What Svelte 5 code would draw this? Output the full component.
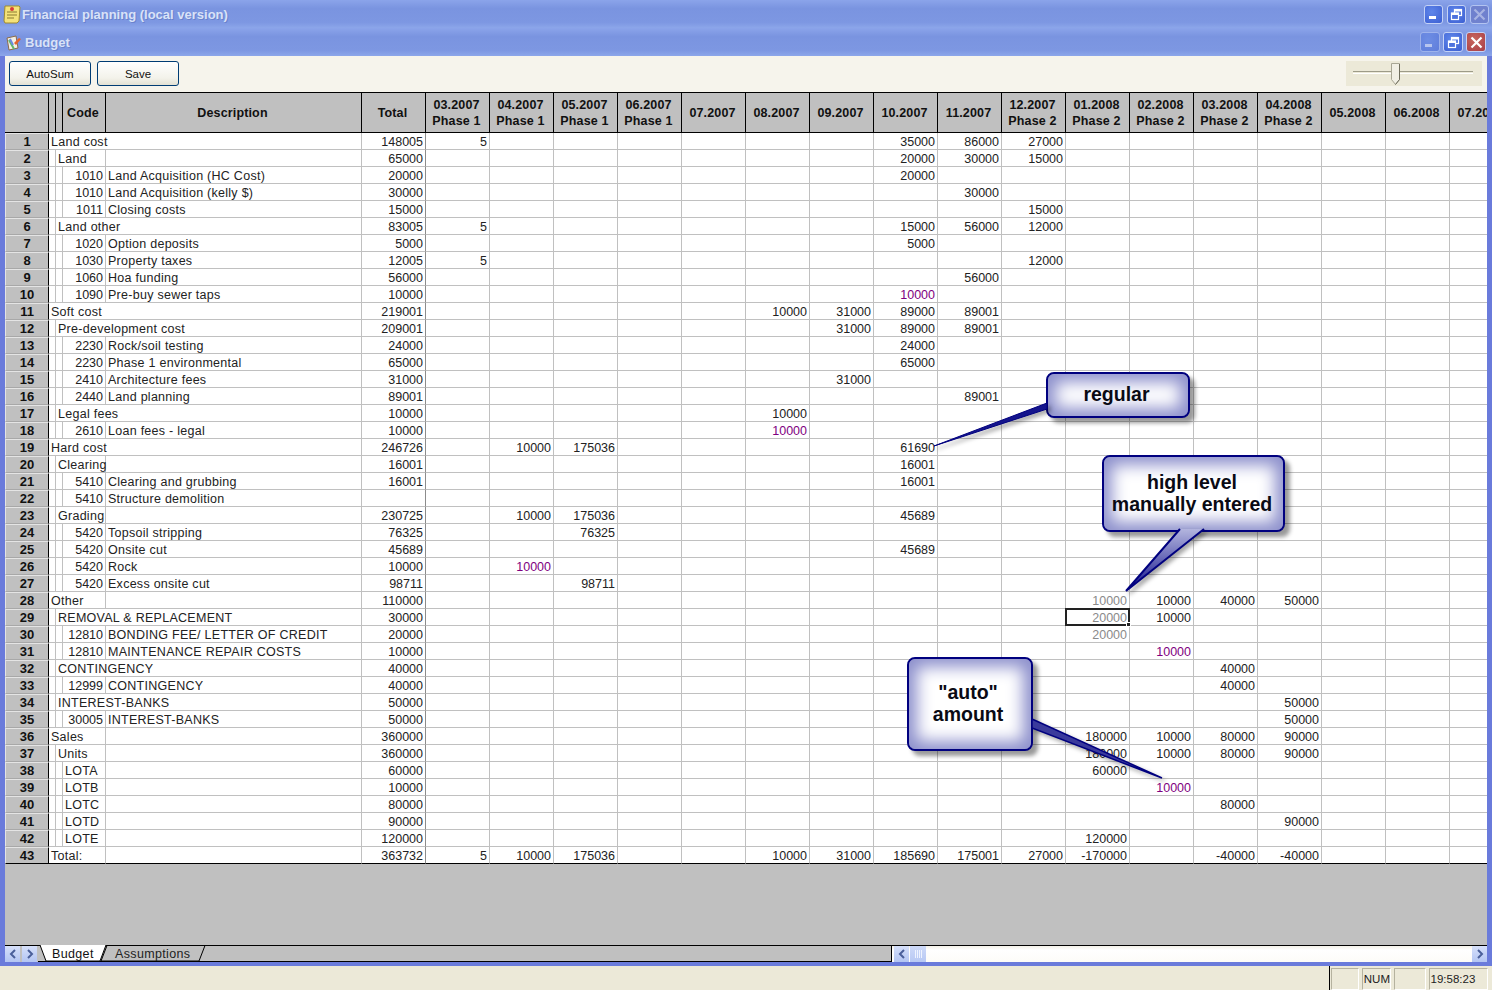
<script>
  const months = [
    ['03.2007', 'Phase 1'], ['04.2007', 'Phase 1'], ['05.2007', 'Phase 1'], ['06.2007', 'Phase 1'],
    ['07.2007'], ['08.2007'], ['09.2007'], ['10.2007'], ['11.2007'],
    ['12.2007', 'Phase 2'], ['01.2008', 'Phase 2'], ['02.2008', 'Phase 2'], ['03.2008', 'Phase 2'], ['04.2008', 'Phase 2'],
    ['05.2008'], ['06.2008'], ['07.2008']
  ];

  // lvl 0-2 = tree depth, over = text runs across the description column
  const rows = [
    { lvl: 0, text: 'Land cost', over: true, total: 148005, v: { 0: 5, 7: 35000, 8: 86000, 9: 27000 } },
    { lvl: 1, text: 'Land', total: 65000, v: { 7: 20000, 8: 30000, 9: 15000 } },
    { lvl: 2, code: 1010, text: 'Land Acquisition (HC Cost)', total: 20000, v: { 7: 20000 } },
    { lvl: 2, code: 1010, text: 'Land Acquisition (kelly $)', total: 30000, v: { 8: 30000 } },
    { lvl: 2, code: 1011, text: 'Closing costs', total: 15000, v: { 9: 15000 } },
    { lvl: 1, text: 'Land other', over: true, total: 83005, v: { 0: 5, 7: 15000, 8: 56000, 9: 12000 } },
    { lvl: 2, code: 1020, text: 'Option deposits', total: 5000, v: { 7: 5000 } },
    { lvl: 2, code: 1030, text: 'Property taxes', total: 12005, v: { 0: 5, 9: 12000 } },
    { lvl: 2, code: 1060, text: 'Hoa funding', total: 56000, v: { 8: 56000 } },
    { lvl: 2, code: 1090, text: 'Pre-buy sewer taps', total: 10000, v: { 7: 10000 }, purple: 7 },
    { lvl: 0, text: 'Soft cost', over: true, total: 219001, v: { 5: 10000, 6: 31000, 7: 89000, 8: 89001 } },
    { lvl: 1, text: 'Pre-development cost', over: true, total: 209001, v: { 6: 31000, 7: 89000, 8: 89001 } },
    { lvl: 2, code: 2230, text: 'Rock/soil testing', total: 24000, v: { 7: 24000 } },
    { lvl: 2, code: 2230, text: 'Phase 1 environmental', total: 65000, v: { 7: 65000 } },
    { lvl: 2, code: 2410, text: 'Architecture fees', total: 31000, v: { 6: 31000 } },
    { lvl: 2, code: 2440, text: 'Land planning', total: 89001, v: { 8: 89001 } },
    { lvl: 1, text: 'Legal fees', over: true, total: 10000, v: { 5: 10000 } },
    { lvl: 2, code: 2610, text: 'Loan fees - legal', total: 10000, v: { 5: 10000 }, purple: 5 },
    { lvl: 0, text: 'Hard cost', over: true, total: 246726, v: { 1: 10000, 2: 175036, 7: 61690 } },
    { lvl: 1, text: 'Clearing', total: 16001, v: { 7: 16001 } },
    { lvl: 2, code: 5410, text: 'Clearing and grubbing', total: 16001, v: { 7: 16001 } },
    { lvl: 2, code: 5410, text: 'Structure demolition', total: '', v: {} },
    { lvl: 1, text: 'Grading', total: 230725, v: { 1: 10000, 2: 175036, 7: 45689 } },
    { lvl: 2, code: 5420, text: 'Topsoil stripping', total: 76325, v: { 2: 76325 } },
    { lvl: 2, code: 5420, text: 'Onsite cut', total: 45689, v: { 7: 45689 } },
    { lvl: 2, code: 5420, text: 'Rock', total: 10000, v: { 1: 10000 }, purple: 1 },
    { lvl: 2, code: 5420, text: 'Excess onsite cut', total: 98711, v: { 2: 98711 } },
    { lvl: 0, text: 'Other', total: 110000, v: { 10: 10000, 11: 10000, 12: 40000, 13: 50000 }, gray: 10 },
    { lvl: 1, text: 'REMOVAL & REPLACEMENT', over: true, total: 30000, v: { 10: 20000, 11: 10000 }, gray: 10, sel: 10 },
    { lvl: 2, code: 12810, text: 'BONDING FEE/ LETTER OF CREDIT', total: 20000, v: { 10: 20000 }, gray: 10 },
    { lvl: 2, code: 12810, text: 'MAINTENANCE REPAIR COSTS', total: 10000, v: { 11: 10000 }, purple: 11 },
    { lvl: 1, text: 'CONTINGENCY', over: true, total: 40000, v: { 12: 40000 } },
    { lvl: 2, code: 12999, text: 'CONTINGENCY', total: 40000, v: { 12: 40000 } },
    { lvl: 1, text: 'INTEREST-BANKS', over: true, total: 50000, v: { 13: 50000 } },
    { lvl: 2, code: 30005, text: 'INTEREST-BANKS', total: 50000, v: { 13: 50000 } },
    { lvl: 0, text: 'Sales', total: 360000, v: { 10: 180000, 11: 10000, 12: 80000, 13: 90000 } },
    { lvl: 1, text: 'Units', total: 360000, v: { 10: 180000, 11: 10000, 12: 80000, 13: 90000 } },
    { lvl: 3, text: 'LOTA', total: 60000, v: { 10: 60000 } },
    { lvl: 3, text: 'LOTB', total: 10000, v: { 11: 10000 }, purple: 11 },
    { lvl: 3, text: 'LOTC', total: 80000, v: { 12: 80000 } },
    { lvl: 3, text: 'LOTD', total: 90000, v: { 13: 90000 } },
    { lvl: 3, text: 'LOTE', total: 120000, v: { 10: 120000 } },
    { lvl: 0, text: 'Total:', total: 363732, v: { 0: 5, 1: 10000, 2: 175036, 5: 10000, 6: 31000, 7: 185690, 8: 175001, 9: 27000, 10: -170000, 12: -40000, 13: -40000 } }
  ];
</script>

{#snippet winButtons(kind)}
  <div class="winbtns {kind}">
    <div class="wb min"><span class="dash"></span></div>
    <div class="wb">
      <svg width="13" height="13" viewBox="0 0 13 13" fill="none" stroke="#fff" stroke-width="1.2">
        <rect x="4.5" y="1.5" width="7" height="6" /><path d="M4.5 2.5h7" stroke-width="2" />
        <rect x="1.5" y="5" width="7" height="6.5" fill="#4d72de" /><path d="M1.5 6h7" stroke-width="2" />
      </svg>
    </div>
    <div class="wb close">
      <svg width="13" height="13" viewBox="0 0 13 13" fill="none" stroke="#fff" stroke-width="2.2">
        <path d="M1.5 1.5l10 10M11.5 1.5l-10 10" />
      </svg>
    </div>
  </div>
{/snippet}

<div class="app">
  <div class="title outer">
    <svg class="ic" width="20" height="20" viewBox="0 0 20 20">
      <path d="M3 2h14l1 1-1 14-2 2H3l-1-2z" fill="#f4e27a" stroke="#a08a30" />
      <path d="M5 8h10M5 11h10M5 14h7" stroke="#8a7a30" />
      <circle cx="10" cy="5" r="2" fill="#d83a3a" />
    </svg>
    <span class="cap">Financial planning (local version)</span>
    {@render winButtons('top')}
  </div>

  <div class="frame">
    <div class="title inner">
      <svg class="ic small" width="17" height="17" viewBox="0 0 17 17">
        <path d="M2 4l9-2 2 12-9 2z" fill="#f3efe6" stroke="#8a6a4a" />
        <path d="M4 6l5 9" stroke="#5fb86a" stroke-width="2" /><path d="M5 5l3 6" stroke="#6a8adf" stroke-width="2" />
        <path d="M9 9l5-5 2 1-5 6z" fill="#e2622c" />
      </svg>
      <span class="cap sub">Budget</span>
      {@render winButtons('doc')}
    </div>

    <div class="toolbar">
      <button class="btn">AutoSum</button>
      <button class="btn">Save</button>
      <div class="slider">
        <div class="track"></div>
        <svg class="thumb" width="10" height="22" viewBox="0 0 10 22">
          <path d="M0.5 0.5h8v16l-4 5-4-5z" fill="#f1efe4" stroke="#a8a694" />
          <path d="M8.5 1v15.5l-4 5" fill="none" stroke="#6f6d5c" />
        </svg>
      </div>
    </div>

    <div class="sheet">
      <div class="row head">
        <div class="hc"></div>
        <div class="hc"></div>
        <div class="hc"></div>
        <div class="hc">Code</div>
        <div class="hc">Description</div>
        <div class="hc">Total</div>
        {#each months as m}
          <div class="hc">{m[0]}{#if m[1]}<br />{m[1]}{/if}</div>
        {/each}
      </div>

      {#each rows as r, i}
        <div class="row" class:last={i === rows.length - 1}>
          <div class="rn">{i + 1}</div>
          {#if r.lvl === 0}
            <div class="c tx" class:s3={!r.over} class:s4={r.over}>{r.text}</div>
          {:else if r.lvl === 1}
            <div class="c"></div>
            <div class="c tx" class:s2={!r.over} class:s3={r.over}>{r.text}</div>
          {:else if r.lvl === 2}
            <div class="c"></div>
            <div class="c"></div>
            <div class="c num">{r.code}</div>
          {:else}
            <div class="c"></div>
            <div class="c"></div>
            <div class="c tx">{r.text}</div>
          {/if}
          {#if r.lvl === 2}
            <div class="c tx">{r.text}</div>
          {:else if !r.over}
            <div class="c"></div>
          {/if}
          <div class="c num tot">{r.total}</div>
          {#each months as _, j}
            <div class="c num" class:purple={r.purple === j} class:gray={r.gray === j} class:sel={r.sel === j}>{r.v[j] ?? ''}</div>
          {/each}
        </div>
      {/each}
      <div class="empty"></div>

      <div class="tabbar">
        <div class="arrow"><svg width="10" height="10" viewBox="0 0 10 10"><path d="M7 1L3 5l4 4" fill="none" stroke="#4a5f9a" stroke-width="2" /></svg></div>
        <div class="arrow"><svg width="10" height="10" viewBox="0 0 10 10"><path d="M3 1l4 4-4 4" fill="none" stroke="#4a5f9a" stroke-width="2" /></svg></div>
        <div class="tabs">
          <svg class="tabshape" width="170" height="17" viewBox="0 0 170 17">
            <path d="M63 16L69 .5H167L161 16z" fill="#c0c0c0" stroke="#000" />
            <path d="M2 0L8 16H62L68 0z" fill="#fff" />
            <path d="M2 0L8 16H62M62 16L68 0" fill="none" stroke="#000" />
          </svg>
          <span class="tab one">Budget</span>
          <span class="tab two">Assumptions</span>
        </div>
        <div class="hscroll">
          <div class="arrow"><svg width="10" height="10" viewBox="0 0 10 10"><path d="M7 1L3 5l4 4" fill="none" stroke="#4a5f9a" stroke-width="2" /></svg></div>
          <div class="grip"><span></span><span></span><span></span><span></span></div>
          <div class="spacer"></div>
          <div class="arrow"><svg width="10" height="10" viewBox="0 0 10 10"><path d="M3 1l4 4-4 4" fill="none" stroke="#4a5f9a" stroke-width="2" /></svg></div>
        </div>
      </div>
    </div>
  </div>

  <div class="status">
    <div class="pane p1"></div>
    <div class="pane p2">NUM</div>
    <div class="pane p3"></div>
    <div class="pane p4">19:58:23</div>
  </div>

  <!-- callouts sit on top of the sheet -->
  <div class="bubble b1">regular</div>
  <div class="bubble b2">high level<br />manually entered</div>
  <div class="bubble b3">"auto"<br />amount</div>
  <svg class="tails" width="1492" height="990" viewBox="0 0 1492 990">
    <defs>
      <linearGradient id="tailfill" x1="0" y1="0" x2="0" y2="1">
        <stop offset="0" stop-color="#b3b5de" />
        <stop offset="1" stop-color="#14148c" />
      </linearGradient>
    </defs>
    <path d="M1047 403L934 446L1047 409z" fill="#14148c" stroke="#00007f" />
    <path d="M1180 529L1126 591L1204 529z" fill="url(#tailfill)" />
    <path d="M1180 529L1126 591L1204 529" fill="none" stroke="#00007f" stroke-width="2" />
    <path d="M1032 719L1162 778L1032 728z" fill="#3a3a9c" stroke="#00007f" stroke-width="1.5" />
  </svg>
</div>

<style>
  :global(body) {
    margin: 0;
    background: #ece9d8;
  }

  .app {
    position: relative;
    width: 1492px;
    height: 990px;
    overflow: hidden;
    display: flex;
    flex-direction: column;
    font-family: "Liberation Sans", Arial, sans-serif;
    font-size: 13px;
    color: #111;
  }

  .title {
    display: flex;
    align-items: center;
    flex: none;
    background: linear-gradient(#8ba4ea, #7a94e0 30%, #7d97e2 80%, #8ca6ea);
  }
  .title.outer {
    height: 28px;
    padding-left: 2px;
  }
  .title.inner {
    height: 28px;
    padding-left: 5px;
  }
  .ic {
    flex: none;
  }
  .ic.small {
    margin-right: 3px;
  }
  .cap {
    margin-left: 0;
    font-weight: bold;
    font-size: 13px;
    color: #d9e2f8;
    text-shadow: 1px 1px 0 #6a82cc;
  }

  .winbtns {
    display: flex;
    gap: 4px;
    margin-left: auto;
  }
  .winbtns.top {
    margin-right: 3px;
  }
  .winbtns.doc {
    margin-right: 6px;
    gap: 3px;
  }
  .wb {
    width: 19px;
    height: 19px;
    border: 1px solid #c4d2f6;
    border-radius: 3px;
    background: radial-gradient(circle at 40% 35%, #5f86ea, #3c5fd2);
    display: flex;
    align-items: center;
    justify-content: center;
    box-sizing: border-box;
  }
  .doc .wb {
    width: 20px;
    height: 20px;
  }
  .wb .dash {
    width: 7px;
    height: 3px;
    background: #fff;
    margin-top: 6px;
    margin-right: 3px;
  }
  .top .close {
    background: #6c7bc8;
    opacity: 0.75;
  }
  .top .close svg {
    opacity: 0.5;
  }
  .doc .min {
    opacity: 0.45;
  }
  .doc .close {
    background: radial-gradient(circle at 40% 35%, #c8675e, #a83e46);
  }

  .frame {
    flex: 1;
    min-height: 0;
    display: flex;
    flex-direction: column;
    background: #6a7bdb;
    padding: 0 5px 4px 5px;
  }
  .frame .title {
    margin: 0 -5px;
  }

  .toolbar {
    flex: none;
    height: 36px;
    box-sizing: border-box;
    padding: 5px 5px 0 4px;
    display: flex;
    gap: 6px;
    background: #f6f4ec;
  }
  .btn {
    width: 82px;
    height: 25px;
    padding: 0;
    border: 1px solid #003c74;
    border-radius: 3px;
    background: linear-gradient(#fff, #f3f2ea 70%, #e3e1d4);
    font-family: inherit;
    font-size: 11.5px;
    color: #111;
  }
  .slider {
    position: relative;
    width: 136px;
    height: 25px;
    margin-left: auto;
    background: #ece9d8;
  }
  .track {
    margin: 10px 9px 0 7px;
    height: 1px;
    border-top: 1px solid #9d9b88;
    border-bottom: 1px solid #fff;
  }
  .thumb {
    position: absolute;
    left: 45px;
    top: 2px;
  }

  .sheet {
    flex: 1;
    min-height: 0;
    display: flex;
    flex-direction: column;
    overflow: hidden;
    background: #c0c0c0;
    border-top: 1px solid #000;
  }

  .row {
    flex: none;
    display: grid;
    grid-template-columns: 44px 7px 7px 43px 256px 64px repeat(17, 64px);
    grid-template-rows: 17px;
    height: 17px;
    background: #fff;
    white-space: nowrap;
  }
  .row.head {
    background: #c0c0c0;
    border-bottom: 1px solid #000;
    box-sizing: content-box;
    grid-template-rows: 39px;
    height: 39px;
  }
  .hc {
    box-sizing: border-box;
    border-right: 1px solid #000;
    padding-right: 2px;
    display: flex;
    align-items: center;
    justify-content: center;
    text-align: center;
    font-weight: bold;
    font-size: 12.5px;
    letter-spacing: 0.15px;
    line-height: 16px;
    color: #111;
  }

  .rn {
    box-sizing: border-box;
    background: #c0c0c0;
    border-top: 1px solid #e4e4e4;
    border-bottom: 1px solid #a8a8a8;
    border-left: 1px solid #e4e4e4;
    border-right: 1px solid #000;
    font-weight: bold;
    font-size: 13px;
    line-height: 15px;
    text-align: center;
  }
  .c {
    position: relative;
    box-sizing: border-box;
    min-width: 0;
    border-right: 1px solid #c0c0c0;
    border-bottom: 1px solid #c0c0c0;
    line-height: 18px;
    font-size: 12.5px;
    color: #222;
  }
  .last .c {
    border-bottom-color: #000;
  }
  .last .rn {
    border-bottom-color: #000;
  }
  .tx {
    padding-left: 2px;
    letter-spacing: 0.27px;
  }
  .num {
    text-align: right;
    padding-right: 2px;
  }
  .tot {
    border-right-color: #8c8c8c;
  }
  .s2 {
    grid-column: span 2;
  }
  .s3 {
    grid-column: span 3;
  }
  .s4 {
    grid-column: span 4;
  }
  .purple {
    color: #800080;
  }
  .gray {
    color: #8a8a8a;
  }
  .sel {
    z-index: 2;
  }
  .sel::after {
    content: "";
    position: absolute;
    left: -1px;
    right: -1px;
    top: -1px;
    bottom: -1px;
    border: 2px solid #222;
  }
  .sel::before {
    content: "";
    position: absolute;
    right: -2px;
    bottom: -2px;
    width: 5px;
    height: 5px;
    background: #222;
    border: 1px solid #fff;
    box-sizing: border-box;
    z-index: 1;
  }

  .empty {
    flex: 1;
  }

  .tabbar {
    flex: none;
    height: 17px;
    display: flex;
    background: #c0c0c0;
    border-top: 1px solid #000;
    box-sizing: border-box;
  }
  .arrow {
    flex: none;
    width: 15px;
    height: 16px;
    margin-right: 2px;
    background: linear-gradient(#d6e0fa, #b3c5f3);
    display: flex;
    align-items: center;
    justify-content: center;
  }
  .tabs {
    position: relative;
    flex: 1;
    height: 16px;
    margin-left: -1px;
    border-bottom: 1px solid #000;
    box-sizing: border-box;
  }
  .tabshape {
    position: absolute;
    left: 0;
    top: -1px;
  }
  .tab {
    position: absolute;
    top: 0;
    font-size: 12.5px;
    letter-spacing: 0.35px;
    line-height: 16px;
  }
  .tab.one {
    left: 14px;
  }
  .tab.two {
    left: 77px;
    color: #222;
  }
  .hscroll {
    flex: none;
    width: 596px;
    height: 16px;
    display: flex;
    box-sizing: border-box;
    padding-left: 2px;
    border-left: 1px solid #000;
    background: linear-gradient(#f3f1e8, #fff 25%, #fdfcf8);
  }
  .hscroll .arrow {
    margin-right: 0;
  }
  .grip {
    flex: none;
    width: 16px;
    margin-left: 1px;
    display: flex;
    gap: 1px;
    justify-content: center;
    align-items: center;
    background: linear-gradient(#cdd9f8, #b8c9f4);
  }
  .grip span {
    width: 1px;
    height: 8px;
    background: #eef3ff;
  }
  .spacer {
    flex: 1;
  }

  .status {
    flex: none;
    height: 24px;
    display: flex;
    box-sizing: border-box;
    padding: 2px 4px 0 1331px;
    gap: 3px;
    background: #ece9d8;
    font-size: 11.5px;
    position: relative;
  }
  .status::before {
    content: "";
    position: absolute;
    left: 1329px;
    top: 0;
    bottom: 0;
    width: 1px;
    background: #000;
  }
  .pane {
    box-sizing: border-box;
    height: 22px;
    border: 1px solid #b5b29f;
    border-right-color: #fff;
    border-bottom-color: #fff;
    line-height: 20px;
    padding-left: 1px;
    color: #222;
  }
  .p1 {
    width: 28px;
  }
  .p2 {
    width: 29px;
  }
  .p3 {
    width: 32px;
  }
  .p4 {
    width: 60px;
  }

  .bubble {
    position: absolute;
    box-sizing: border-box;
    display: flex;
    align-items: center;
    justify-content: center;
    text-align: center;
    font-size: 19.5px;
    line-height: 22px;
    font-weight: bold;
    color: #0a0a14;
    background: #fff;
    border: 2px solid #00007f;
    border-radius: 8px;
    padding-right: 3px;
    box-shadow: inset 0 0 16px 8px #8d90cc, 5px 5px 4px rgba(0, 0, 0, 0.4);
  }
  .b1 {
    left: 1046px;
    top: 372px;
    width: 144px;
    height: 46px;
    padding-bottom: 3px;
  }
  .b2 {
    left: 1102px;
    top: 455px;
    width: 183px;
    height: 77px;
    padding-bottom: 2px;
  }
  .b3 {
    left: 907px;
    top: 657px;
    width: 126px;
    height: 94px;
    padding-bottom: 2px;
    padding-right: 4px;
  }
  .tails {
    position: absolute;
    left: 0;
    top: 0;
    pointer-events: none;
    filter: drop-shadow(3px 3px 2px rgba(0, 0, 0, 0.35));
  }
</style>
